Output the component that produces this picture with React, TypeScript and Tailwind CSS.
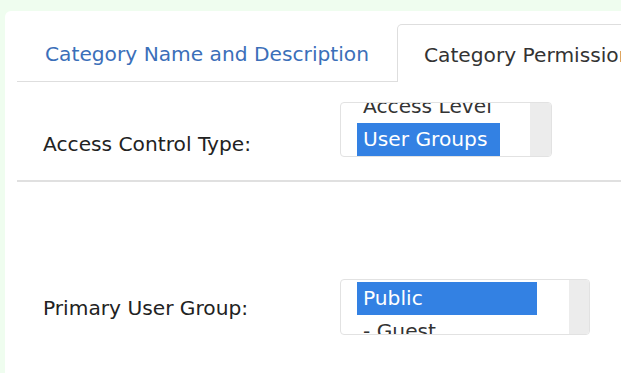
export default function App() {
  return (
    <div
      className="w-[621px] h-[373px] overflow-hidden bg-[#effdef] pt-[11px] pl-[5px]"
      style={{ fontFamily: '"DejaVu Sans", sans-serif' }}
    >
      <div className="h-full bg-white rounded-tl-[6px] pl-[12px] pt-[13px]">
        {/* Tabs */}
        <div className="flex h-[58px] border-b border-[#dedede] whitespace-nowrap">
          <div className="flex items-center pt-[3px] pl-[28px] pr-[28px] text-[20.2px] text-[#3b6fb9]">
            Category Name and Description
          </div>
          <div className="-mb-px flex items-center pt-[3px] pl-[26px] pr-[20px] bg-white border border-b-0 border-[#dedede] rounded-t-[5px] text-[20.2px] text-[#333]">
            Category Permissions
          </div>
        </div>

        {/* Row 1 */}
        <div className="flex h-[98px] pt-[20px] pl-[26px]">
          <div className="w-[297px] pt-[27px] text-[20.2px] text-[#222]">Access Control Type:</div>
          <div className="relative flex w-[212px] h-[55px] border border-[#e2e2e2] rounded-[4px] overflow-hidden bg-white">
            <div className="flex-1 pl-[16px] overflow-hidden">
              <div className="-mt-[13px] text-[20.2px] leading-[33px]">
                <div className="px-[6px] w-[143px] text-[#333]">Access Level</div>
                <div className="px-[6px] w-[143px] bg-[#3381e3] text-white">User Groups</div>
              </div>
            </div>
            <div className="w-[21px] h-full bg-[#ececec]"></div>
          </div>
        </div>

        {/* Divider */}
        <div className="h-[2px] bg-[#e0e0e0]"></div>

        {/* Row 2 */}
        <div className="flex pt-[97px] pl-[26px]">
          <div className="w-[297px] flex items-center pt-[3px] text-[20.2px] text-[#222]">Primary User Group:</div>
          <div className="relative flex w-[250px] h-[56px] border border-[#e2e2e2] rounded-[4px] overflow-hidden bg-white">
            <div className="flex-1 pl-[16px] pt-[2px] overflow-hidden">
              <div className="text-[20.2px] leading-[33px]">
                <div className="px-[6px] w-[180px] bg-[#3381e3] text-white">Public</div>
                <div className="px-[6px] w-[180px] text-[#333]">- Guest</div>
              </div>
            </div>
            <div className="w-[20px] h-full bg-[#ececec]"></div>
          </div>
        </div>
      </div>
    </div>
  );
}
